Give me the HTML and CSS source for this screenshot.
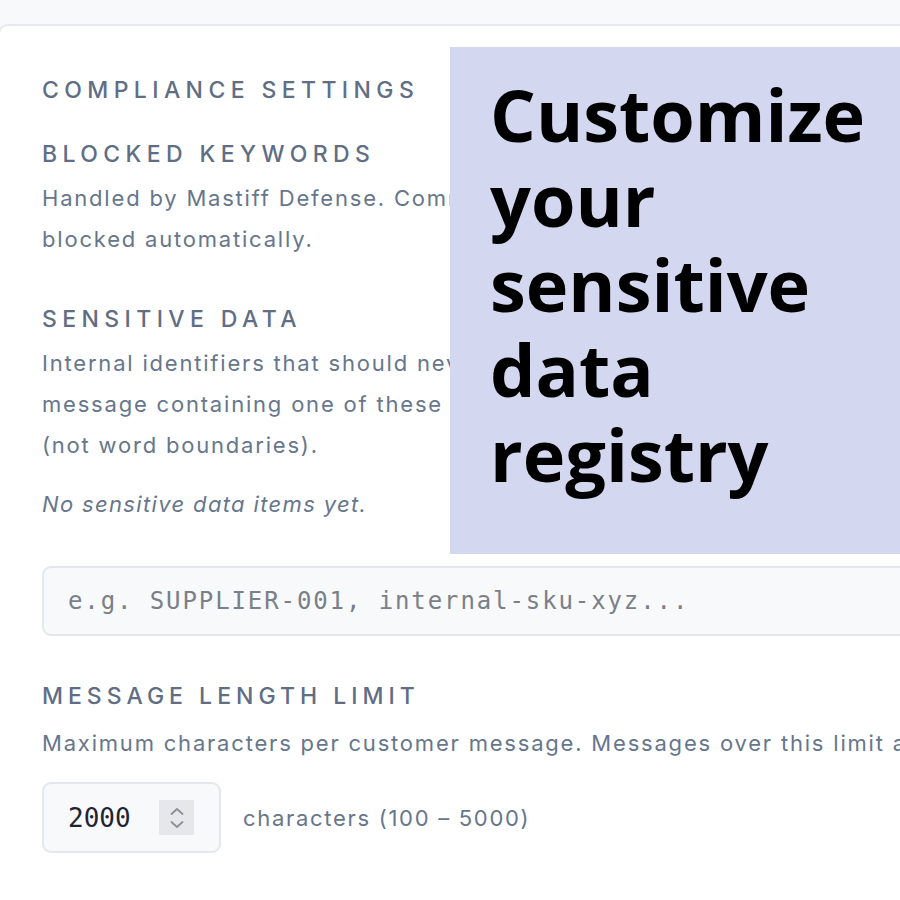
FILE: index.html
```html
<!DOCTYPE html>
<html>
<head>
<meta charset="utf-8">
<link rel="stylesheet" href="styles.css">
</head>
<body>
<div class="topbar"></div>
<div class="card">
  <h2 class="title">Compliance Settings</h2>
  <section class="block">
    <h3 class="label">Blocked Keywords</h3>
    <p class="desc">Handled by Mastiff Defense. Common profanity, slurs and abusive language are<br>blocked automatically.</p>
  </section>
  <section class="block">
    <h3 class="label">Sensitive Data</h3>
    <p class="desc">Internal identifiers that should never be shared with customers. Any AI reply or<br>message containing one of these strings is blocked. Matching is substring-based<br>(not word boundaries).</p>
    <p class="empty">No sensitive data items yet.</p>
    <div class="textinput">e.g. SUPPLIER-001, internal-sku-xyz...</div>
  </section>
  <section class="block limit">
    <h3 class="label label-tight">Message Length Limit</h3>
    <p class="desc">Maximum characters per customer message. Messages over this limit are rejected.</p>
    <div class="row">
      <div class="numinput">
        <span class="num">2000</span>
        <span class="spin">
          <svg width="16" height="28" viewBox="0 0 16 28"><path d="M2.5 10 L8 5 L13.5 10" fill="none" stroke="#8a8f99" stroke-width="1.8" stroke-linecap="round" stroke-linejoin="round"/><path d="M2.5 18 L8 23 L13.5 18" fill="none" stroke="#8a8f99" stroke-width="1.8" stroke-linecap="round" stroke-linejoin="round"/></svg>
        </span>
      </div>
      <span class="unit">characters (100 – 5000)</span>
    </div>
  </section>
</div>
<div class="overlay">Customize your sensitive data registry</div>
</body>
</html>
```
FILE: styles.css
```css
html, body { margin: 0; padding: 0; }
body {
  width: 900px; height: 900px; overflow: hidden;
  background: #f8f9fb;
  font-family: Inter, "Noto Sans", sans-serif;
  color: #64748b;
  position: relative;
}
.topbar { height: 24px; }
.card {
  background: #fff;
  border: 2px solid #e6e9ef;
  border-right: none;
  border-radius: 10px 0 0 0;
  margin-left: -2px;
  width: 1400px;
  height: 900px;
  padding: 51px 0 0 42px;
  box-sizing: border-box;
}
.title, .label {
  margin: 0;
  font-family: Inter, sans-serif;
  font-weight: 500;
  text-transform: uppercase;
  letter-spacing: 5.4px;
  color: #5f6e85;
  font-size: 23px;
  line-height: 26px;
  white-space: nowrap;
}
.label-tight { letter-spacing: 5px; }
.title { margin-bottom: 38px; }
.desc {
  margin: 11px 0 0 0;
  font-size: 22px;
  letter-spacing: 1.8px;
  line-height: 41px;
  color: #66768c;
  white-space: nowrap;
}
.block + .block { margin-top: 46px; }
.empty {
  margin: 23px 0 0 0;
  font-style: italic;
  font-size: 22px;
  letter-spacing: 1.35px;
  line-height: 30px;
  color: #66768c;
}
.textinput {
  margin-top: 47px;
  height: 70px;
  box-sizing: border-box;
  border: 2px solid #e4e7ec;
  border-radius: 9px;
  background: #f8f9fb;
  padding-left: 24px;
  display: flex; align-items: center;
  font-family: "DejaVu Sans Mono", monospace;
  font-size: 24px;
  letter-spacing: 1.9px;
  color: #7a7f88;
}
.block.limit { margin-top: 47px; }
.limit .desc { margin-top: 14px; }
.row {
  margin-top: 18px;
  display: flex; align-items: center; gap: 22px;
}
.numinput {
  width: 179px; height: 71px;
  box-sizing: border-box;
  border: 2px solid #e4e7ec;
  border-radius: 9px;
  background: #f8f9fb;
  display: flex; align-items: center;
  padding-left: 24px;
}
.num {
  font-family: "DejaVu Sans Mono", monospace;
  font-size: 26px;
  color: #1f2430;
  width: 91px;
}
.spin {
  width: 35px; height: 35px; background: #e6e7ea;
  display: flex; align-items: center; justify-content: center;
}
.unit { font-size: 22px; letter-spacing: 1.7px; color: #66768c; }
.overlay {
  position: absolute;
  left: 450px; top: 47px;
  width: 450px; height: 507px;
  box-sizing: border-box;
  background: #d3d7f0;
  padding: 25px 20px 0 40px;
  font-family: "Open Sans", sans-serif;
  font-weight: 700;
  font-size: 72px;
  line-height: 85px;
  color: #000;
}
```
